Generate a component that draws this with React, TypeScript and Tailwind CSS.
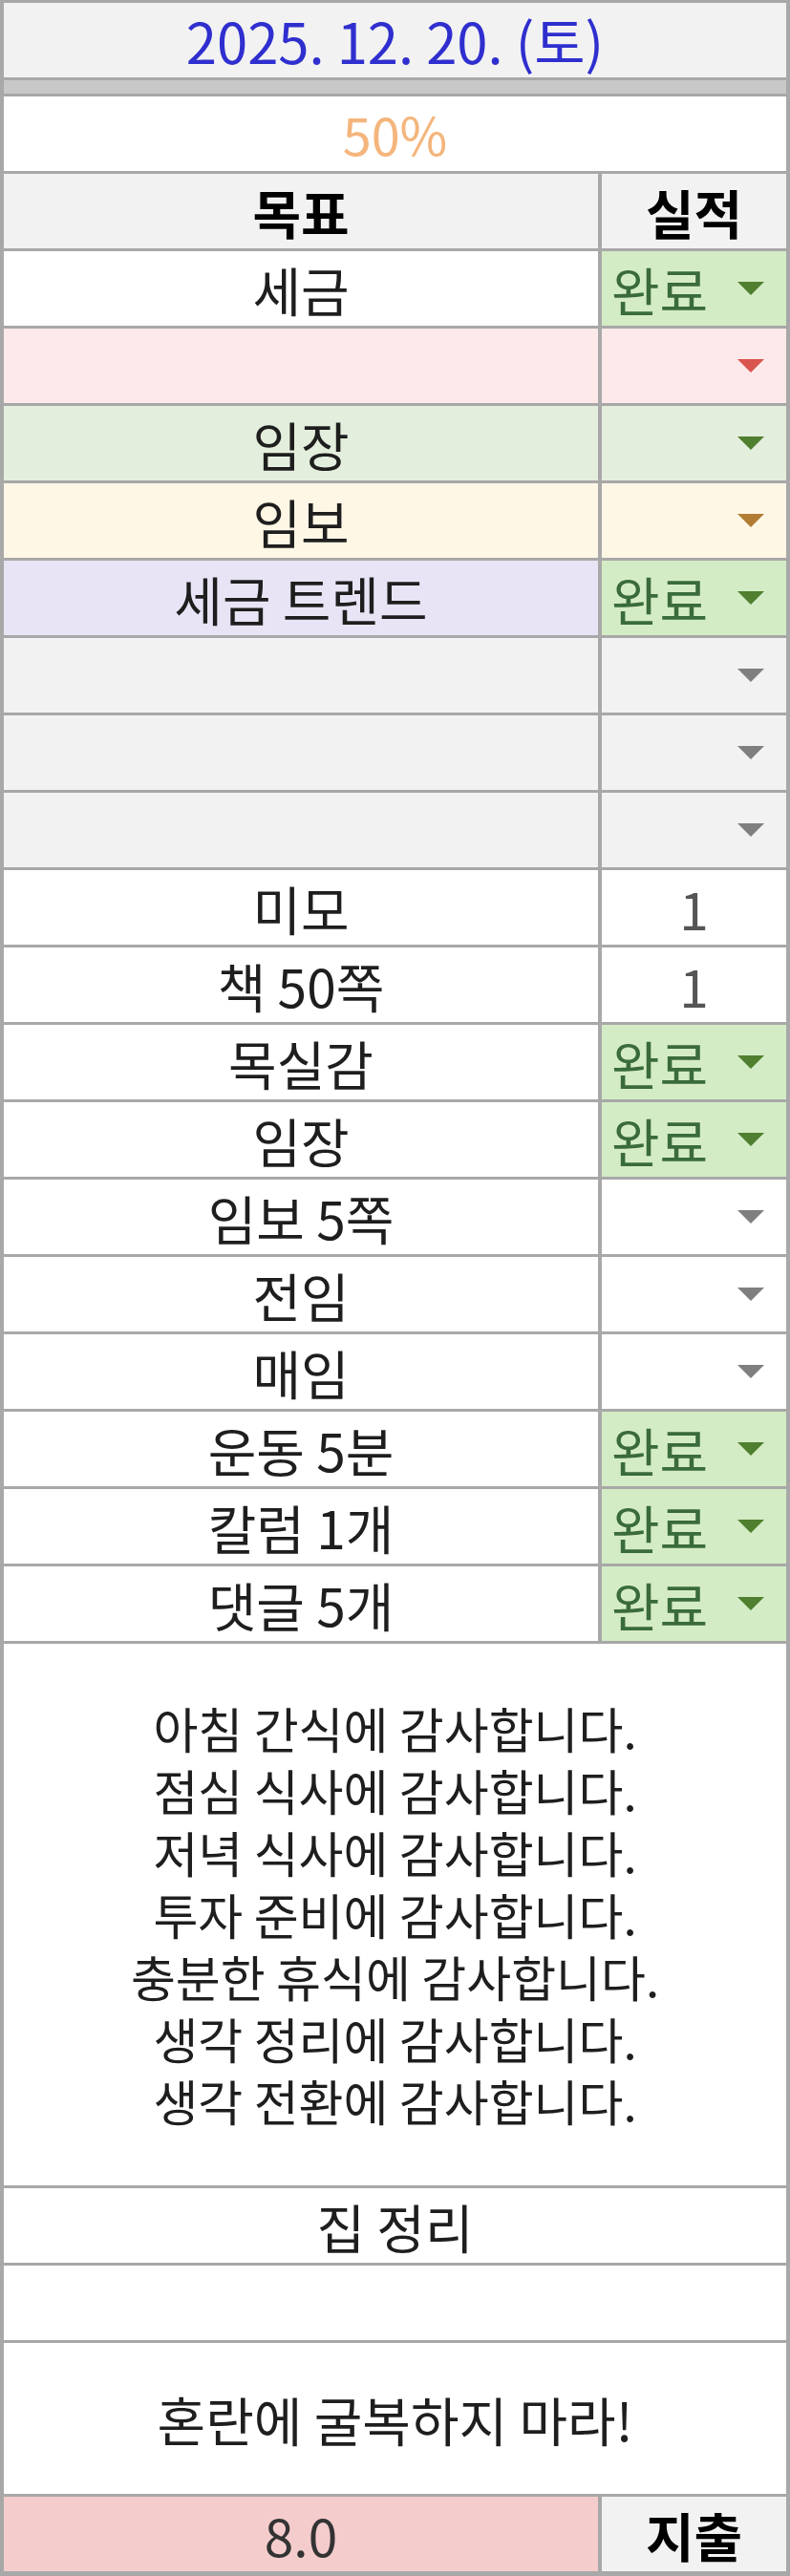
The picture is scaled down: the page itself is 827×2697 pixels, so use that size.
import React from 'react';

type Tone = 'white' | 'pink' | 'sage' | 'cream' | 'lilac' | 'gray';

interface Goal {
    label: string;
    tone: Tone;
    done?: boolean;
    value?: string;
}

const goals: Goal[] = [
    { label: '세금', tone: 'white', done: true },
    { label: '', tone: 'pink' },
    { label: '임장', tone: 'sage' },
    { label: '임보', tone: 'cream' },
    { label: '세금 트렌드', tone: 'lilac', done: true },
    { label: '', tone: 'gray' },
    { label: '', tone: 'gray' },
    { label: '', tone: 'gray' },
    { label: '미모', tone: 'white', value: '1' },
    { label: '책 50쪽', tone: 'white', value: '1' },
    { label: '목실감', tone: 'white', done: true },
    { label: '임장', tone: 'white', done: true },
    { label: '임보 5쪽', tone: 'white' },
    { label: '전임', tone: 'white' },
    { label: '매임', tone: 'white' },
    { label: '운동 5분', tone: 'white', done: true },
    { label: '칼럼 1개', tone: 'white', done: true },
    { label: '댓글 5개', tone: 'white', done: true },
];

const toneBg: Record<Tone, string> = {
    white: 'bg-white',
    pink: 'bg-[#fde9e9]',
    sage: 'bg-[#e4eedd]',
    cream: 'bg-[#fff7e5]',
    lilac: 'bg-[#e8e4f5]',
    gray: 'bg-[#f2f2f2]',
};

const toneArrow: Record<Tone, string> = {
    white: '#7f7f7f',
    pink: '#d9534f',
    sage: '#4f7f2f',
    cream: '#b27d33',
    lilac: '#7f7f7f',
    gray: '#7f7f7f',
};

const thanks = [
    '아침 간식에 감사합니다.',
    '점심 식사에 감사합니다.',
    '저녁 식사에 감사합니다.',
    '투자 준비에 감사합니다.',
    '충분한 휴식에 감사합니다.',
    '생각 정리에 감사합니다.',
    '생각 전환에 감사합니다.',
];

function Arrow({ color }: { color: string }) {
    return (
        <svg width="28" height="14" viewBox="0 0 28 14" className="shrink-0">
            <polygon points="0,0 28,0 14,14" fill={color} />
        </svg>
    );
}

function GoalRow({ goal }: { goal: Goal }) {
    return (
        <div className="flex h-[78px] gap-[4px]">
            <div className={`flex w-[622px] items-center justify-center ${toneBg[goal.tone]}`}>
                {goal.label}
            </div>
            {goal.done ? (
                <div className="flex flex-1 items-center justify-between bg-[#d4ecc5] pl-[10px] pr-[23px] text-[#3a6b3a]">
                    <span>완료</span>
                    <Arrow color="#4f7f2f" />
                </div>
            ) : goal.value ? (
                <div className="flex flex-1 items-center justify-center bg-white text-[#555]">
                    {goal.value}
                </div>
            ) : (
                <div className={`flex flex-1 items-center justify-end pr-[23px] ${toneBg[goal.tone]}`}>
                    <Arrow color={toneArrow[goal.tone]} />
                </div>
            )}
        </div>
    );
}

export default function App() {
    return (
        <div
            className="flex w-[827px] flex-col gap-[3px] bg-[#a8a8a8] px-[4px] pt-[3px] pb-[5px] text-[55px] leading-none text-[#1e1e1e]"
            style={{ fontFamily: '"Noto Sans CJK KR", "Noto Sans", sans-serif' }}
        >
            {/* Date */}
            <div className="flex h-[78px] items-center justify-center bg-[#f2f2f2] text-[58px] text-[#2f2fcf]">
                2025. 12. 20. (토)
            </div>
            <div className="h-[14px] bg-[#c8c8c8]" />

            {/* Progress */}
            <div className="flex h-[78px] items-center justify-center bg-white text-[54px] text-[#f4b57c]">
                50%
            </div>

            {/* Header */}
            <div className="flex h-[78px] gap-[4px] font-bold text-black">
                <div className="flex w-[622px] items-center justify-center bg-[#f2f2f2]">목표</div>
                <div className="flex flex-1 items-center justify-center bg-[#f2f2f2]">실적</div>
            </div>

            {goals.map((goal, i) => (
                <GoalRow key={i} goal={goal} />
            ))}

            {/* Gratitude */}
            <div className="flex h-[567px] flex-col items-center justify-center bg-white text-[51px] leading-[65px]">
                {thanks.map((line) => (
                    <div key={line}>{line}</div>
                ))}
            </div>

            <div className="flex h-[78px] items-center justify-center bg-white">집 정리</div>
            <div className="h-[78px] bg-white" />
            <div className="flex h-[158px] items-center justify-center bg-white">혼란에 굴복하지 마라!</div>

            {/* Spending */}
            <div className="flex h-[78px] gap-[4px]">
                <div className="flex w-[622px] items-center justify-center bg-[#f4cccc] text-[#333]">8.0</div>
                <div className="flex flex-1 items-center justify-center bg-[#f2f2f2] font-bold text-black">지출</div>
            </div>
        </div>
    );
}
